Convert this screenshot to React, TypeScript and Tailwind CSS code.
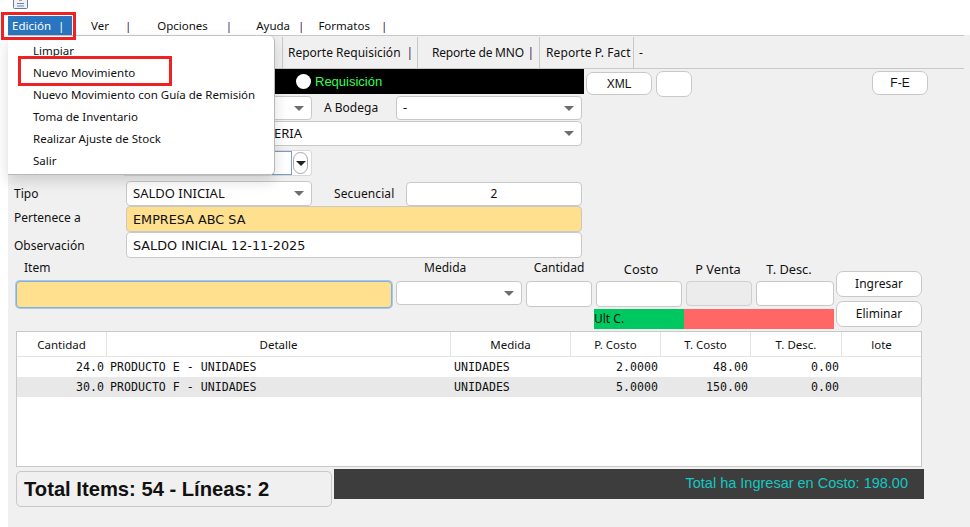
const fieldBase = "rounded-[4px] border border-[#c8c8c8] bg-white";
const colWidths = "grid-cols-[90px_344px_120px_90px_90px_91px_1fr]";

const rows = [
  { cant: "24.0", det: "PRODUCTO E - UNIDADES", med: "UNIDADES", pc: "2.0000", tc: "48.00", td: "0.00" },
  { cant: "30.0", det: "PRODUCTO F - UNIDADES", med: "UNIDADES", pc: "5.0000", tc: "150.00", td: "0.00" },
];

function Caret() {
  return <span className="ml-auto mr-[7px] h-0 w-0 border-x-[5px] border-t-[5px] border-x-transparent border-t-[#6e6e6e]" />;
}

function Select({ text, className = "" }: { text?: string; className?: string }) {
  return (
    <div className={`${fieldBase} flex items-center pl-[6px] text-[13px] text-[#111] ${className}`}>
      <span className="whitespace-nowrap">{text}</span>
      <Caret />
    </div>
  );
}

function Sep() {
  return <span className="text-[#3f1660]">|</span>;
}

function Button({ children, className = "" }: { children?: React.ReactNode; className?: string }) {
  return (
    <div className={`flex items-center justify-center rounded-[7px] border border-[#c8c8c8] bg-white text-[12px] text-[#111] ${className}`}>
      {children}
    </div>
  );
}

export default function App() {
  return (
    <div className="relative h-[527px] w-[970px] overflow-hidden bg-white font-['Liberation_Sans',sans-serif] text-[#111]">
      {/* top strip with cropped app icon */}
      <div className="h-[16px] pl-[13px]">
        <svg width="16" height="9" viewBox="0 0 16 9" className="block">
          <path d="M0.5 0V7.5Q0.5 8.5 1.5 8.5H13.5Q14.5 8.5 14.5 7.5V0" fill="#eef2f7" stroke="#6f7c8c" />
          <path d="M4 3.5H11M4 6H11" stroke="#5b87c5" />
          <path d="M6 0.5H9" stroke="#e0913a" />
        </svg>
      </div>

      {/* menu bar */}
      <div className="flex h-[19px] items-center font-['Noto_Sans',sans-serif] text-[11.5px]">
        <div className="ml-[8px] flex h-[19px] w-[64px] items-center gap-[7px] bg-[#2a75c0] pl-[4px] text-white">
          <span>Edición</span>
          <span>|</span>
        </div>
        <span className="ml-[19px]">Ver</span>
        <span className="ml-[16px]"><Sep /></span>
        <span className="ml-[26px]">Opciones</span>
        <span className="ml-[18px]"><Sep /></span>
        <span className="ml-[24px]">Ayuda</span>
        <span className="ml-[8px]"><Sep /></span>
        <span className="ml-[14px]">Formatos</span>
        <span className="ml-[11px]"><Sep /></span>
      </div>

      {/* form area */}
      <div className="ml-[8px] h-[492px] bg-[#f0f0f0]">
        {/* toolbar */}
        <div className="flex h-[34px] w-[956px] items-center border-y border-[#c8c8c8] pt-[1px] font-['Noto_Sans',sans-serif] text-[12px]">
          <div className="flex h-full w-[275px] items-center justify-end border-r border-[#c8c8c8] pr-[5px]"><Sep /></div>
          <div className="flex h-full w-[135px] items-center justify-between border-r border-[#c8c8c8] pl-[5px] pr-[4px]">
            <span className="whitespace-nowrap">Reporte Requisición</span>
            <Sep />
          </div>
          <div className="flex h-full w-[122px] items-center justify-between border-r border-[#c8c8c8] pl-[14px] pr-[5px]">
            <span className="whitespace-nowrap tracking-[-0.2px]">Reporte de MNO</span>
            <Sep />
          </div>
          <div className="flex h-full w-[94px] items-center border-r border-[#c8c8c8] pl-[6px]">
            <span className="whitespace-nowrap tracking-[0.1px]">Reporte P. Fact</span>
          </div>
          <span className="ml-[5px]">-</span>
        </div>

        {/* tipo row */}
        <div className="flex h-[26px] items-start">
          <div className="flex h-[25px] w-[576px] items-center bg-black pl-[288px]">
            <span className="h-[15px] w-[15px] rounded-full bg-white" />
            <span className="ml-[4px] text-[13px] text-[#33ff55]">Requisición</span>
          </div>
          <Button className="ml-[2px] mt-[3px] h-[23px] w-[66px]">XML</Button>
          <Button className="ml-[4px] mt-[2px] h-[26px] w-[36px]" />
          <Button className="ml-[180px] mt-[2px] h-[24px] w-[56px]">F-E</Button>
        </div>

        {/* bodega rows */}
        <div className="flex h-[25px] items-end pl-[118px] font-['Noto_Sans',sans-serif]">
          <Select className="h-[24px] w-[186px]" />
          <span className="ml-[12px] h-[24px] w-[72px] text-[12px] leading-[24px]">A Bodega</span>
          <Select text="-" className="h-[24px] w-[186px]" />
        </div>
        <div className="mt-[1px] flex h-[25px] items-center pl-[118px] font-['Noto_Sans',sans-serif]">
          <div className={`${fieldBase} flex h-[25px] w-[456px] items-center pl-[147px] text-[13px]`}>
            <span>ERIA</span>
            <Caret />
          </div>
        </div>

        {/* fecha */}
        <div className="mt-[4px] flex h-[26px] w-[304px] justify-end">
          <div className="flex h-[26px] w-[188px] items-center justify-end gap-[1px] rounded-r-[3px] border border-[#d8d8d8] bg-white pr-[3px]">
            <div className="h-[24px] w-[20px] border border-[#7a9cc6] bg-white" />
            <div className="flex h-[22px] w-[15px] items-center justify-center rounded-full border border-[#a8a8a8] bg-white">
              <span className="h-0 w-0 border-x-[5px] border-t-[5px] border-x-transparent border-t-[#222]" />
            </div>
          </div>
        </div>

        {/* tipo + secuencial */}
        <div className="mt-[5px] flex h-[25px] items-center font-['Noto_Sans',sans-serif]">
          <span className="w-[118px] pl-[6px] pt-[1px] text-[12px]">Tipo</span>
          <Select text="SALDO INICIAL" className="h-[25px] w-[186px]" />
          <span className="ml-[22px] w-[72px] pt-[1px] text-[12px] tracking-[0.1px]">Secuencial</span>
          <div className={`${fieldBase} flex h-[24px] w-[176px] items-center justify-center text-[12px]`}>2</div>
        </div>
        <div className="flex h-[26px] items-center">
          <span className="w-[118px] pb-[2px] pl-[6px] font-['Noto_Sans',sans-serif] text-[12px]">Pertenece a</span>
          <div className="flex h-[26px] w-[456px] items-center rounded-[4px] border border-[#c8c8c8] bg-[#fee08f] pl-[6px] pt-[2px] font-['DejaVu_Sans',sans-serif] text-[12.8px]">EMPRESA ABC SA</div>
        </div>
        <div className="flex h-[26px] items-center">
          <span className="w-[118px] pl-[6px] pt-[2px] font-['Noto_Sans',sans-serif] text-[12px]">Observación</span>
          <div className={`${fieldBase} flex h-[26px] w-[456px] items-center pl-[6px] pt-[2px] font-['DejaVu_Sans',sans-serif] text-[12.8px]`}>SALDO INICIAL 12-11-2025</div>
        </div>

        {/* item entry */}
        <div className="flex h-[73px] font-['Noto_Sans',sans-serif] text-[12px]">
          <div className="ml-[8px] mt-[4px] w-[376px]">
            <div className="h-[19px] pl-[8px] leading-[12px]">Item</div>
            <div className="h-[27px] rounded-[4px] border border-[#80b0e0] bg-[#fee08f] shadow-[0_0_0_1px_#a8c8ea]" />
          </div>
          <div className="ml-[4px] mt-[4px] w-[126px]">
            <div className="h-[19px] pl-[28px] leading-[12px]">Medida</div>
            <Select className="h-[24px]" />
          </div>
          <div className="ml-[4px] mt-[4px] w-[66px]">
            <div className="h-[19px] text-center leading-[12px]">Cantidad</div>
            <div className={`${fieldBase} h-[26px]`} />
          </div>
          <div className="ml-[2px] mt-[5px] w-[240px]">
            <div className="flex h-[18px] text-center text-[12.8px] leading-[13px]">
              <span className="w-[94px]">Costo</span>
              <span className="w-[60px]">P Venta</span>
              <span className="w-[82px]">T. Desc.</span>
            </div>
            <div className="flex gap-[4px] pl-[2px]">
              <div className={`${fieldBase} h-[26px] w-[86px]`} />
              <div className="h-[25px] w-[66px] rounded-[4px] border border-[#d0d0d0] bg-[#ececec]" />
              <div className={`${fieldBase} h-[25px] w-[78px]`} />
            </div>
            <div className="mt-[2px] flex h-[20px]">
              <div className="w-[90px] bg-[#00c860] text-[12px] leading-[20px]">Ult C.</div>
              <div className="w-[150px] bg-[#ff6666]" />
            </div>
          </div>
          <div className="ml-[2px] mt-[13px] flex w-[86px] flex-col gap-[4px]">
            <Button className="h-[26px]">Ingresar</Button>
            <Button className="h-[26px]">Eliminar</Button>
          </div>
        </div>

        {/* table */}
        <div className="ml-[8px] h-[136px] w-[906px] border border-[#c8c8c8] bg-white">
          <div className={`grid ${colWidths} h-[25px] border-b border-[#e4e4e4] font-['Noto_Sans',sans-serif] text-[11.5px]`}>
            {["Cantidad", "Detalle", "Medida", "P. Costo", "T. Costo", "T. Desc.", "lote"].map((h) => (
              <div key={h} className="flex items-center justify-center border-r border-[#e4e4e4] pt-[1px] last:border-r-0">{h}</div>
            ))}
          </div>
          {rows.map((r, i) => (
            <div key={r.det} className={`grid ${colWidths} h-[20px] items-center pt-[1px] font-['DejaVu_Sans_Mono',monospace] text-[11.6px] ${i % 2 ? "bg-[#e8e8e8]" : "bg-white"}`}>
              <span className="pr-[3px] text-right">{r.cant}</span>
              <span className="pl-[3px]">{r.det}</span>
              <span className="pl-[3px]">{r.med}</span>
              <span className="pr-[3px] text-right">{r.pc}</span>
              <span className="pr-[3px] text-right">{r.tc}</span>
              <span className="pr-[3px] text-right">{r.td}</span>
              <span />
            </div>
          ))}
        </div>

        {/* totals */}
        <div className="ml-[8px] mt-[2px] flex items-start">
          <div className="mt-[2px] flex h-[36px] w-[316px] items-center rounded-[5px] border border-[#c8c8c8] pl-[7px] text-[20.2px] font-bold">
            Total Items: 54 - Líneas: 2
          </div>
          <div className="ml-[2px] flex h-[30px] w-[590px] items-center justify-end bg-[#3d3d3d] pr-[16px] text-[14.5px] text-[#14c8c0]">
            Total ha Ingresar en Costo: 198.00
          </div>
        </div>
      </div>

      {/* open dropdown menu */}
      <div className="absolute left-[8px] top-[36px] flex h-[139px] w-[267px] flex-col justify-center rounded-r-[5px] border-b border-r border-[#b8b8b8] bg-white pl-[25px] pt-[2px] font-['Noto_Sans',sans-serif] text-[11.5px] shadow-[0_6px_14px_rgba(0,0,0,0.15)]">
        {["Limpiar", "Nuevo Movimiento", "Nuevo Movimiento con Guía de Remisión", "Toma de Inventario", "Realizar Ajuste de Stock", "Salir"].map((m) => (
          <div key={m} className="flex h-[22px] items-center whitespace-nowrap">{m}</div>
        ))}
      </div>

      {/* red highlights */}
      <div className="absolute left-[1px] top-[12px] h-[28px] w-[75px] border-[3px] border-[#ee2222]" />
      <div className="absolute left-[18px] top-[56px] h-[30px] w-[154px] border-[3px] border-[#ee2222]" />
    </div>
  );
}
